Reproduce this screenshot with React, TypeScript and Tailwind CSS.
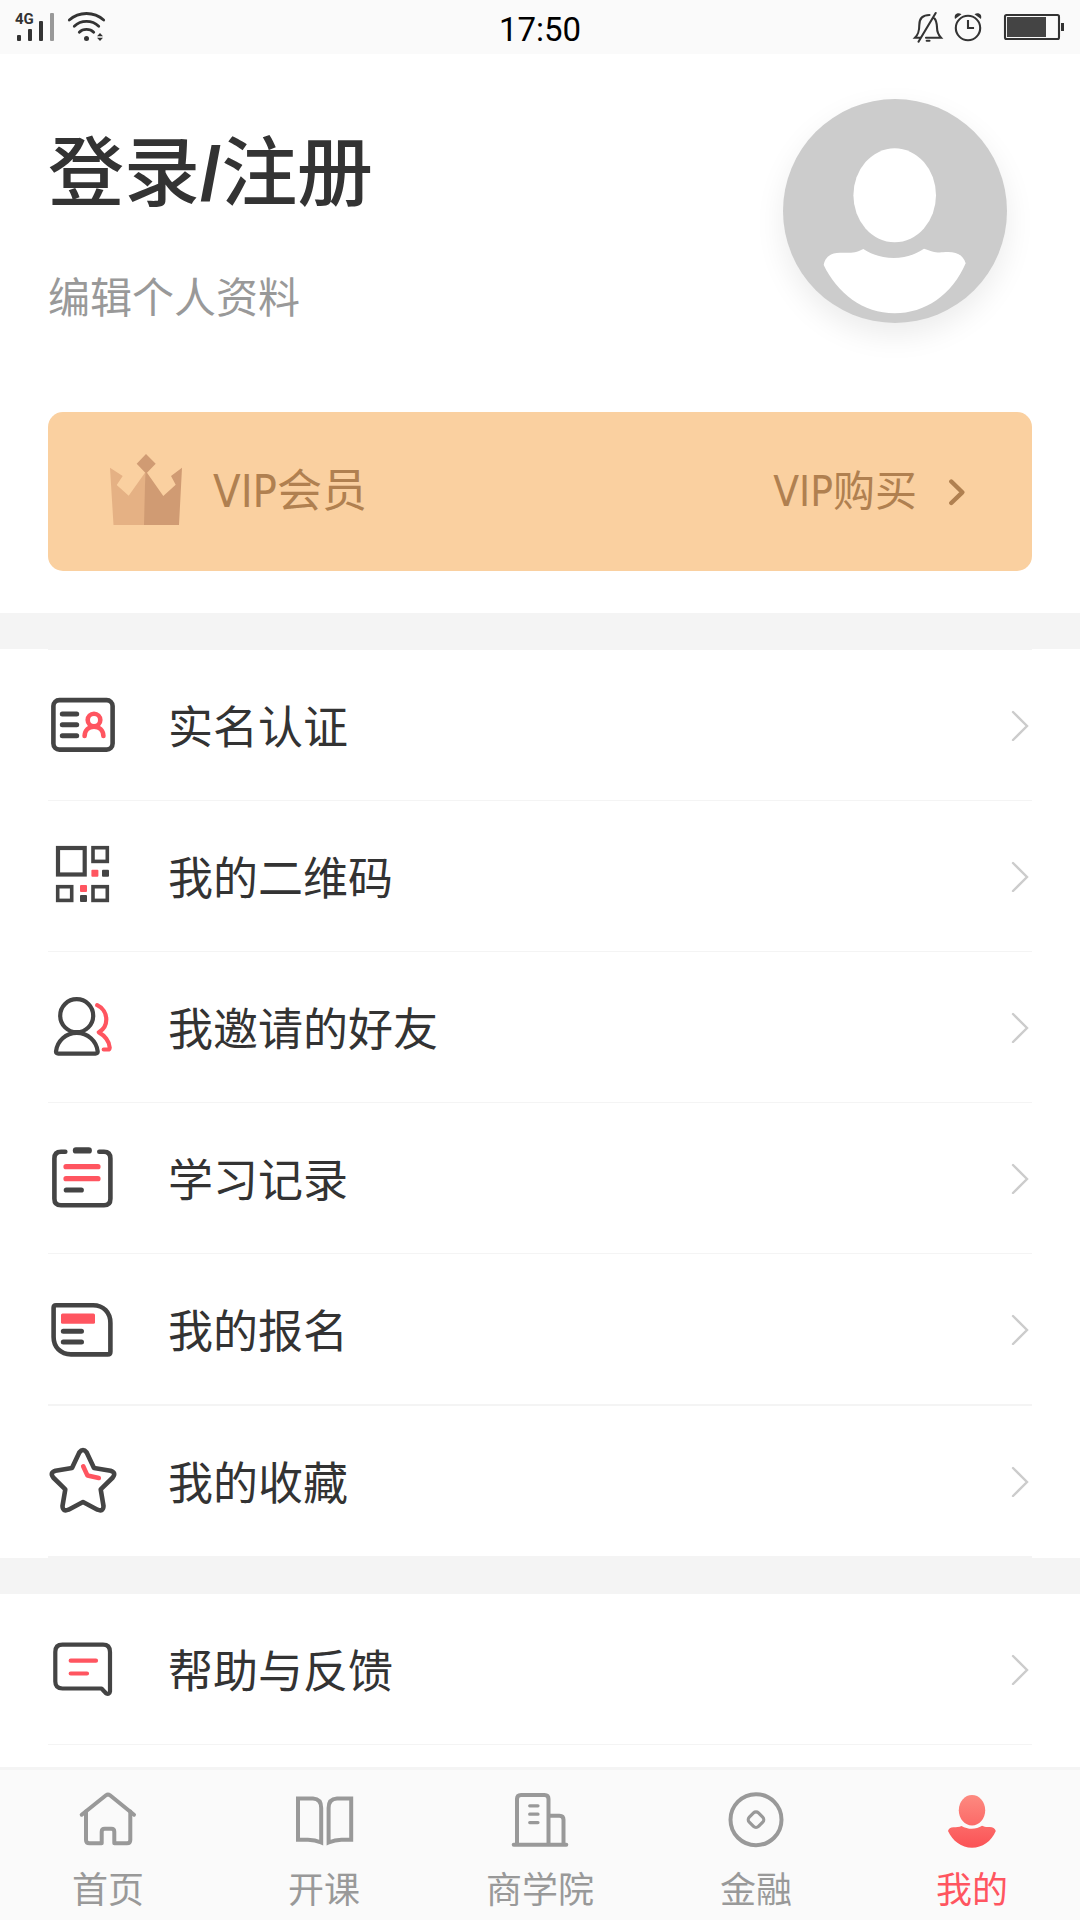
import type { ReactNode } from 'react'

const DARK = '#444444'
const RED = '#ff5560'

const BUST =
  'M40.7 166 C42 158 48 153.7 57 153.7 C66 153.9 72 154.5 80.3 150 C99 162 123 162 141 149.7 C149 152.5 152 153.8 160 153.3 C172 152 180 155 182.7 164.3 C169 196 142 214.3 111.7 214.3 C80 214.3 54 194 40.7 166Z'

function StatusBar() {
  return (
    <header className="flex h-[54px] shrink-0 items-center justify-between bg-[#fafafa]">
      <svg className="h-[54px] w-[168px]" viewBox="0 0 168 54" fill="none" stroke="#333" strokeLinecap="round" aria-hidden="true">
        <text x="15" y="24" fill="#333" stroke="none" fontSize="15" fontWeight="700" fontFamily="Roboto, sans-serif">
          4G
        </text>
        <g fill="#333" stroke="none">
          <rect x="17" y="35" width="4" height="6" rx="1" />
          <rect x="28" y="29" width="4" height="12" rx="1" />
          <rect x="39" y="21" width="4" height="20" rx="1" />
          <rect x="50" y="13" width="4" height="28" rx="1" fill="#999" />
          <circle cx="86.5" cy="38.5" r="2.5" />
          <path d="M97 36.3 L100 33 L103 36.3Z M97 37.7 L100 41 L103 37.7Z" />
        </g>
        <path d="M69.3 20 C79 11.3 94 11.3 103.7 20 M74.3 26.3 C81 19.8 92 19.8 98.7 26.3 M79.3 32.3 C83 28.5 90 28.5 93.7 32.3" strokeWidth="2.8" />
      </svg>
      <time className="pt-1 font-['Roboto',sans-serif] text-[33px] leading-none text-black">17:50</time>
      <svg className="h-[54px] w-[168px]" viewBox="0 0 168 54" fill="none" stroke="#333" strokeWidth="2.1" strokeLinecap="round" aria-hidden="true">
        <path d="M8 37.7 H3 C6 34.5 7.3 32 7.3 25 C7.3 18 11 15 17.5 15 M22.5 18.5 C24.7 21 24.8 24 25 27.5 C25 33 27 35.5 29 37.7 H14 M6.5 41.7 L23.7 13 M14.7 40.7 H17.5" />
        <circle cx="56" cy="28" r="12.2" />
        <path d="M56 21 V28 H61" strokeLinecap="square" />
        <path d="M43 19 C41.5 14 46 12 49.5 14.3Z M69 19 C70.5 14 66 12 62.5 14.3Z" fill="#333" stroke="none" />
        <rect x="93" y="15" width="54" height="24" rx="1.5" />
        <rect x="95" y="17" width="39" height="20" fill="#444" stroke="none" />
        <rect x="149" y="23" width="3" height="8" fill="#333" stroke="none" />
      </svg>
    </header>
  )
}

function Icon({ children }: { children: ReactNode }) {
  return (
    <svg
      className="size-[68px] shrink-0"
      viewBox="0 0 68 68"
      fill="none"
      stroke={DARK}
      strokeWidth="4.6"
      strokeLinecap="round"
      strokeLinejoin="round"
      overflow="visible"
      aria-hidden="true"
    >
      {children}
    </svg>
  )
}

const mainItems = [
  {
    label: '实名认证',
    icon: (
      <Icon>
        <rect x="5.4" y="9.1" width="59.2" height="49.5" rx="6" />
        <path d="M14.3 23 H28.7 M14.3 33.8 H28.7 M14.3 44.7 H28.7" strokeWidth="5" />
        <g stroke={RED}>
          <circle cx="46" cy="29" r="6.3" />
          <path d="M36.6 45 C36.8 39.3 40.8 35.8 46 35.8 S55.2 39.3 55.4 45" />
        </g>
      </Icon>
    ),
  },
  {
    label: '我的二维码',
    icon: (
      <Icon>
        <g strokeWidth="4.2" strokeLinejoin="miter">
          <rect x="10" y="6" width="26.7" height="26.5" />
          <rect x="45" y="5.7" width="14.3" height="13.7" strokeWidth="3.6" />
          <rect x="9.7" y="44.7" width="14" height="13.7" strokeWidth="3.6" />
          <rect x="45" y="44.7" width="14.3" height="13.7" strokeWidth="3.6" />
        </g>
        <g stroke="none" fill={DARK}>
          <rect x="54" y="27.7" width="7" height="7" rx="1" />
          <rect x="32" y="53" width="7" height="7" rx="1" />
          <rect x="43.4" y="27.7" width="7" height="7" rx="1" fill={RED} />
          <rect x="32" y="43" width="7" height="7" rx="1" fill={RED} />
        </g>
      </Icon>
    ),
  },
  {
    label: '我邀请的好友',
    icon: (
      <Icon>
        <circle cx="28.7" cy="22.7" r="16.5" strokeWidth="4.2" />
        <path d="M8 58.5 C9 48 18 39.8 28.8 39.8 S48.7 48 49.7 58.5 Q49.8 60.6 47.5 60.6 H10.2 Q7.9 60.6 8 58.5Z" strokeWidth="4.2" />
        <path d="M49.2 12.2 C55 14.8 58.3 20.5 58.3 26.5 C58.3 32 55.2 36.8 50.8 39.3 C56.5 42.3 61.5 48.5 61.7 54.5 Q61.5 56.5 60 56.5 H55.7" stroke={RED} strokeWidth="4.2" />
      </Icon>
    ),
  },
  {
    label: '学习记录',
    icon: (
      <Icon>
        <path d="M17.3 7.7 H13 Q6.4 7.7 6.4 14.5 V54.7 Q6.4 61.3 13 61.3 H56 Q62.4 61.3 62.4 54.7 V14.5 Q62.4 7.7 56 7.7 H51.3" />
        <path d="M28 6.4 H40.7" strokeWidth="6.4" />
        <path d="M18 22.7 H50 M18 34.7 H50" stroke={RED} strokeWidth="5.2" />
        <path d="M18.3 46 H33.3" strokeWidth="5.2" />
      </Icon>
    ),
  },
  {
    label: '我的报名',
    icon: (
      <Icon>
        <path d="M8 10.3 H45 C55.5 10.3 62.4 17.5 62.4 28 V56.7 Q62.4 59.4 59.7 59.4 H23 C12.5 59.4 5.6 52 5.6 42 V12.7 Q5.6 10.3 8 10.3Z" />
        <rect x="13" y="18.4" width="34" height="10.3" rx="1.5" fill={RED} stroke="none" />
        <path d="M15.3 36.3 H33.5 M15.3 47 H33.5" strokeWidth="5" />
      </Icon>
    ),
  },
  {
    label: '我的收藏',
    icon: (
      <Icon>
        <path d="M31.3 5.5 Q35 0.6 38.7 5.5 L46 21 L62.5 23.7 Q68.5 25.5 64.8 30.5 L52.7 42.3 L55.5 59 Q55.3 65 49.5 62.7 L35 55 L20.5 62.7 Q14.7 65 14.5 59 L17.3 42.3 L5.2 30.5 Q1.5 25.5 7.5 23.7 L24 21Z" />
        <path d="M35.2 19.3 L39.5 28.6 L50.8 31" stroke={RED} />
      </Icon>
    ),
  },
]

const helpItems = [
  {
    label: '帮助与反馈',
    icon: (
      <Icon>
        <path d="M14.5 9.7 H55 Q62 9.7 62 17 V56.5 Q61.5 60 58 58.3 L53.5 53.5 H14.5 Q7.3 53.5 7.3 46.5 V17 Q7.3 9.7 14.5 9.7Z" strokeWidth="4.2" />
        <path d="M22.7 25.7 H48 M22.7 38.5 H39" stroke={RED} strokeWidth="4.2" />
      </Icon>
    ),
  },
]

const tabs = [
  {
    label: '首页',
    icon: (
      <>
        <path d="M3.7 24.7 L28 5.3 Q30 3.8 32 5.3 L56 24.7" />
        <path d="M8 21.5 V50 Q8 53.3 11.5 53.3 H23.7 V41.7 Q23.7 38.7 26.7 38.7 H33.3 Q36.3 38.7 36.3 41.7 V53.3 H49 Q52.3 53.3 52.3 50 V21.5" />
      </>
    ),
  },
  {
    label: '开课',
    icon: (
      <>
        <path d="M4 8.6 H19 Q27.2 9 27.2 18 V52.5 Q21 49.7 14 49.7 H4Z" strokeLinejoin="miter" />
        <path d="M57.2 8.6 H43 Q34.6 9 34.6 18 V52.5 Q41 49.7 47.5 49.7 H57.2Z" strokeLinejoin="miter" />
      </>
    ),
  },
  {
    label: '商学院',
    icon: (
      <>
        <path d="M3.7 54.7 H56.3" />
        <path d="M7 54 V9 Q7 5 11 5 H34.5 Q38.5 5 38.5 9 V54 M38.5 25.7 H49.5 Q53.5 25.7 53.5 29.7 V54" />
        <path d="M19.7 15.8 H28 M19.7 24.2 H28 M19.7 32.6 H28" strokeWidth="3.2" />
      </>
    ),
  },
  {
    label: '金融',
    icon: (
      <>
        <circle cx="30" cy="29.7" r="25.5" />
        <rect x="23.5" y="23.2" width="13" height="13" rx="3.5" strokeWidth="3.2" transform="rotate(45 30 29.7)" />
      </>
    ),
  },
  {
    label: '我的',
    active: true,
    icon: (
      <g fill="url(#mine)" stroke="none">
        <defs>
          <linearGradient id="mine" gradientUnits="userSpaceOnUse" x1="0" y1="5" x2="0" y2="55">
            <stop offset="0" stopColor="#fd8a80" />
            <stop offset="1" stopColor="#fb5558" />
          </linearGradient>
        </defs>
        <ellipse cx="30" cy="20.3" rx="13.2" ry="15.2" />
        <path d="M6 41 C6.5 38.5 8.5 37.2 11.5 37.2 C14.5 37.2 17 37.2 19.5 36 C26 39.8 34 39.8 40 35.8 C42.5 37 44.5 37.2 47 37 C50.5 36.8 53 38.2 53.8 41 C49.3 51.5 40.3 57.7 30 57.7 C19.5 57.7 10.5 51 6 41Z" />
      </g>
    ),
  },
]

function MenuList({ items, className = '' }: { items: typeof mainItems; className?: string }) {
  return (
    <ul className={`mx-12 border-[#f4f4f4] ${className}`}>
      {items.map((item) => (
        <li key={item.label} className="border-b border-[#f4f4f4] nth-[n+5]:border-b-2">
          <button type="button" className="flex h-[150px] w-full items-center text-left">
            {item.icon}
            <span className="ml-[52px] flex-1 text-[45px] leading-[60px] text-[#333]">{item.label}</span>
            <svg className="mr-[3px] h-8 w-[18px]" viewBox="0 0 18 32" fill="none" stroke="#ccc" strokeWidth="2.4" strokeLinecap="round" aria-hidden="true">
              <path d="M2 3 L16 17 L2 31" />
            </svg>
          </button>
        </li>
      ))}
    </ul>
  )
}

export default function App() {
  return (
    <div className="flex h-screen flex-col overflow-hidden bg-white font-['Noto_Sans_CJK_SC',sans-serif]">
      <StatusBar />

      <main className="min-h-0 flex-1 overflow-hidden">
        <section className="px-12 pt-[45px] pb-[42px]">
          <div className="flex items-start justify-between pr-[25px]">
            <div className="pt-6">
              <h1 className="text-[76px] leading-[88px] font-medium text-[#333]">
                <a href="#login">
                  登录<span className="font-['Liberation_Sans',sans-serif] leading-[60px] font-bold">/</span>注册
                </a>
              </h1>
              <p className="mt-14 text-[42px] leading-[56px] text-[#999]">编辑个人资料</p>
            </div>
            <button type="button" aria-label="头像" className="size-[224px] rounded-full bg-[#ccc] shadow-[0_12px_30px_rgba(0,0,0,0.08)]">
              <svg viewBox="0 0 224 224" fill="#fff" aria-hidden="true">
                <ellipse cx="111.7" cy="96.3" rx="41.3" ry="47" />
                <path d={BUST} />
              </svg>
            </button>
          </div>

          <button
            type="button"
            className="mt-[89px] flex h-[159px] w-full items-center rounded-[15px] bg-[#fad0a0] pr-[66px] pl-[62px] font-['Liberation_Sans_Narrow','DejaVu_Sans_Condensed','Noto_Sans_CJK_SC',sans-serif] text-[#b08050]"
          >
            <svg className="mb-1 h-[71px] w-[72px]" viewBox="0 0 72 71" aria-hidden="true">
              <path d="M0 13.7 L12.7 22 L6.7 31 L18.7 41.7 L35.5 18 L35 71 H3.5Z" fill="#e5b184" />
              <path d="M36 0 L45.7 9.7 L37 18.7 L53.3 42 L65.7 30.7 L61 22 L72 13.7 L69 71 H34 L35.3 18.7 L26.7 9.7Z" fill="#d09b73" />
            </svg>
            <span className="ml-[31px] flex-1 text-left text-[45px] leading-[60px]">VIP会员</span>
            <span className="text-[42px] leading-[60px]">VIP购买</span>
            <svg className="ml-[31px] h-7 w-[18px]" viewBox="0 0 18 28" fill="none" stroke="currentColor" strokeWidth="4.4" strokeLinecap="round" strokeLinejoin="round" aria-hidden="true">
              <path d="M3.3 3.5 L14.3 14.3 L3.3 25" />
            </svg>
          </button>
        </section>

        <div className="h-9 bg-[#f4f4f4]" />
        <MenuList items={mainItems} className="border-t" />
        <div className="h-9 bg-[#f4f4f4]" />
        <MenuList items={helpItems} />
      </main>

      <nav className="grid shrink-0 grid-cols-5 border-t-3 border-[#f4f4f4] bg-[#fafafa]">
        {tabs.map((tab) => (
          <a
            key={tab.label}
            href={`#${tab.label}`}
            aria-current={tab.active ? 'page' : undefined}
            className={`flex h-[150px] flex-col items-center pt-5 ${tab.active ? 'text-[#ff5560]' : 'text-[#999]'}`}
          >
            <svg className="size-[60px]" viewBox="0 0 60 60" fill="none" stroke="currentColor" strokeWidth="4" strokeLinecap="round" strokeLinejoin="round" aria-hidden="true">
              {tab.icon}
            </svg>
            <span className="mt-[15px] text-[36px] leading-[44px]">{tab.label}</span>
          </a>
        ))}
      </nav>
    </div>
  )
}
